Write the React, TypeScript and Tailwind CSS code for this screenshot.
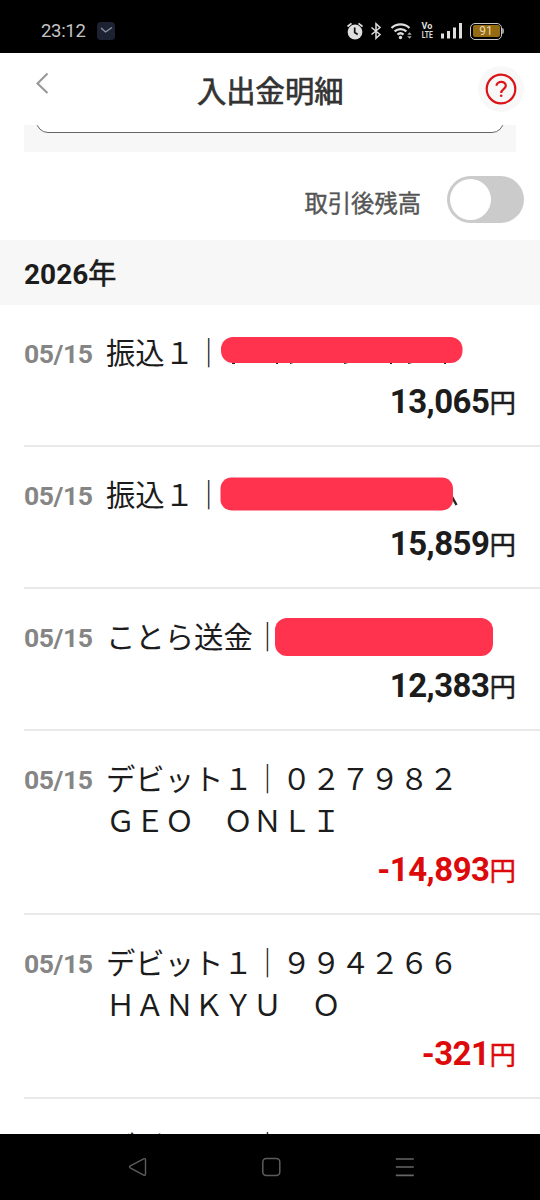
import React from 'react';

interface Transaction {
  id: number;
  date: string;
  lines: string[];
  amount: string;
  negative?: boolean;
  mask?: React.ReactNode;
}

const MASK_COLOR = '#ff334e';

const transactions: Transaction[] = [
  {
    id: 1,
    date: '05/15',
    lines: ['振込１｜'],
    amount: '13,065',
    mask: (
      <svg className="absolute left-[220px] top-[31px]" width="244" height="30" viewBox="0 0 244 30">
        <path
          d="M12 27.300h3M56 27.300h2M70 27.300l3-1M124 27.300l4-1M170 27.300h2M188 27.300l4-1M224 27.300h2"
          stroke="#222"
          strokeWidth="1.400"
        />
        <rect x="1" y="1" width="241.500" height="26" rx="12" fill={MASK_COLOR} />
      </svg>
    ),
  },
  {
    id: 2,
    date: '05/15',
    lines: ['振込１｜'],
    amount: '15,859',
    mask: (
      <svg className="absolute left-[220px] top-[29px]" width="240" height="36" viewBox="0 0 240 36">
        <path d="M231 19l5.500 10" stroke="#222" strokeWidth="2.400" />
        <rect x="0.500" y="1.500" width="232.500" height="33" rx="11" fill={MASK_COLOR} />
      </svg>
    ),
  },
  {
    id: 3,
    date: '05/15',
    lines: ['ことら送金｜'],
    amount: '12,383',
    mask: (
      <div className="absolute left-[275px] top-[29px] h-[38px] w-[218px] rounded-xl bg-[#ff334e]" />
    ),
  },
  {
    id: 4,
    date: '05/15',
    lines: ['デビット１｜０２７９８２', 'ＧＥＯ　ＯＮＬＩ'],
    amount: '-14,893',
    negative: true,
  },
  {
    id: 5,
    date: '05/15',
    lines: ['デビット１｜９９４２６６', 'ＨＡＮＫＹＵ　Ｏ'],
    amount: '-321',
    negative: true,
  },
  { id: 6, date: '', lines: ['デビット１｜'], amount: '' },
];

const StatusBar: React.FC = () => (
  <div className="flex h-[53px] shrink-0 items-center bg-black pt-[9px] pl-[41px] text-[#c4c4c4]">
    <span className="w-14 text-[18.500px] leading-none tracking-[-0.300px]">23:12</span>
    <svg width="18" height="18" viewBox="0 0 18 18" fill="none">
      <rect width="18" height="18" rx="4" fill="#1d2233" />
      <path d="M4 6l4.500 4 6.500-4.500" stroke="#8f97a3" strokeWidth="1.300" />
    </svg>

    <svg className="ml-[231px]" width="18" height="18" viewBox="0 0 18 18" fill="none">
      <circle cx="9" cy="10" r="7.400" fill="#dedede" />
      <path d="M1.500 4.500l4-3.200M16.500 4.500l-4-3.200" stroke="#dedede" strokeWidth="1.700" />
      <path d="M8.700 5.500V10.500l3 2" stroke="#111" strokeWidth="1.700" />
    </svg>
    <svg className="ml-[6px]" width="12" height="18" viewBox="0 0 12 18" fill="none">
      <path d="M1.500 5.500L10 12.500 6 16.300V1.700L10 5.500 1.500 12.500" stroke="#dedede" strokeWidth="1.500" />
    </svg>
    <svg className="ml-[8px]" width="24" height="18" viewBox="0 0 24 18" fill="none">
      <path d="M1.500 6a13 13 0 0 1 18 0M4.600 9.400a8.600 8.600 0 0 1 11.800 0M7.500 12.600a4.500 4.500 0 0 1 6 0" stroke="#dedede" strokeWidth="2.200" />
      <circle cx="10.500" cy="15.500" r="1.700" fill="#dedede" />
      <path d="M17.300 12.800l2.200-2.500 2.200 2.500zM17.300 14.300l2.200 2.500 2.200-2.500z" fill="#aaa" />
    </svg>
    <div className="ml-[7px] flex w-3 flex-col items-center text-[9px] font-bold text-[#dedede]">
      <span className="leading-[9px]">Vo</span>
      <span className="origin-center scale-x-75 leading-[9px]">LTE</span>
    </div>
    <svg className="ml-[7px]" width="24" height="18" viewBox="0 0 24 18" fill="#dedede">
      <rect x="1" y="11.500" width="3" height="5" />
      <rect x="7" y="9" width="3" height="7.500" />
      <rect x="13" y="5.500" width="3" height="11" />
      <rect x="19" y="1" width="3" height="15.500" />
    </svg>
    <div className="ml-[6px] flex items-center">
      <div className="flex h-[17px] w-8 items-center justify-center rounded-[5px] border-[1.500px] border-[#c9c9c9] p-[1.500px]">
        <span className="flex h-full w-full items-center justify-center rounded-[2px] bg-[#946a12] text-[12px] leading-none text-[#ead9ac]">
          91
        </span>
      </div>
      <div className="h-[6px] w-[2px] rounded-r bg-[#999]" />
    </div>
  </div>
);

const Header: React.FC = () => (
  <header className="flex h-[72px] shrink-0 items-center bg-white pr-4 pl-9">
    <svg width="46" height="24" viewBox="0 0 46 24" fill="none" className="-mt-3">
      <path d="M11.500 2.500L1.500 12.500l10 9.500" stroke="#999" strokeWidth="2.200" />
    </svg>
    <h1 className="ml-[115px] pt-[7px] text-[29.300px] leading-none font-normal text-[#333] [-webkit-text-stroke:0.700px_#333]">
      入出金明細
    </h1>
    <button className="ml-auto flex h-[46px] w-[46px] items-center justify-center rounded-full bg-[#f8f8f8]">
      <svg width="32" height="32" viewBox="0 0 32 32" fill="none" stroke="#dc1418">
        <circle cx="16" cy="16" r="14.300" strokeWidth="2.200" />
        <path d="M11.500 12.700c.3-5.200 9.500-5 9.300.2-.2 3.300-4.600 3.100-4.600 7" strokeWidth="2.200" />
        <circle cx="16.200" cy="22.800" r="1.300" fill="#dc1418" stroke="none" />
      </svg>
    </button>
  </header>
);

const TransactionRow: React.FC<{ item: Transaction }> = ({ item }) => (
  <li className="relative shrink-0 pt-7">
    <div className="flex pl-6">
      <span className="h-[42px] w-[82px] text-[26.500px] leading-[42px] font-bold tracking-[-0.400px] text-[#858585]">
        {item.date}
      </span>
      <div className="text-[29.350px] leading-[42px] whitespace-nowrap text-[#1c1c1c]">
        {item.lines.map((line) => (
          <p key={line} className="h-[42px]">{line}</p>
        ))}
      </div>
    </div>
    <div
      className={`flex h-[70px] items-baseline justify-end pt-[6px] pr-6 leading-[42px] ${
        item.negative ? 'text-[#dc0a0a]' : 'text-[#1c1c1c]'
      }`}
    >
      <span className="text-[33px] font-bold tracking-[-0.500px]">{item.amount}</span>
      {item.amount && (
        <span className="text-[26.500px] [-webkit-text-stroke:0.400px_currentColor]">円</span>
      )}
    </div>
    <div className="ml-6 h-[2px] bg-[#e9e9e9]" />
    {item.mask}
  </li>
);

const NavBar: React.FC = () => (
  <nav className="flex h-[66px] shrink-0 items-center bg-black pl-32">
    <svg width="20" height="20" viewBox="0 0 20 20" fill="none" stroke="#5c5c5c" strokeWidth="1.400">
      <path d="M15.700 1.800L2.200 8.900q-1.400.9 0 1.900l13.500 7.300q1.800.7 1.800-1V2.800q0-1.700-1.800-1z" />
    </svg>
    <svg className="ml-[113px]" width="20" height="20" viewBox="0 0 20 20" fill="none" stroke="#5c5c5c" strokeWidth="1.500">
      <rect x="1.800" y="1.600" width="17" height="17" rx="3.500" />
    </svg>
    <svg className="ml-[114px]" width="20" height="20" viewBox="0 0 20 20" stroke="#666" strokeWidth="1.600">
      <path d="M.8 2h18M.8 10h18M.8 18.400h18" />
    </svg>
  </nav>
);

export default function App() {
  return (
    <div className="flex h-[1200px] w-[540px] flex-col overflow-hidden bg-white font-[Roboto,'Noto_Sans_CJK_JP',sans-serif]">
      <StatusBar />
      <Header />
      <main className="flex min-h-0 flex-1 flex-col overflow-hidden">
        <div className="mx-6 flex h-[27px] shrink-0 items-start overflow-hidden bg-[#f7f7f7] px-3">
          <div className="-mt-5 h-7 w-full rounded-xl border-[1.500px] border-[#666] bg-white" />
        </div>
        <div className="flex h-[88px] shrink-0 items-center justify-end pr-4">
          <span className="mt-[17px] text-[23.300px] leading-none text-[#555] [-webkit-text-stroke:0.400px_#555]">
            取引後残高
          </span>
          <span className="mt-[6px] ml-[26px] flex h-[47px] w-[77px] items-center rounded-full bg-[#cbcbcb] p-[3px]">
            <span className="h-[41px] w-[41px] rounded-full bg-white" />
          </span>
        </div>
        <h2 className="flex h-[65px] shrink-0 items-center bg-[#f7f7f7] pt-[4px] pl-6 text-[28px] font-bold text-[#1c1c1c]">
          <span>2026</span>
          <span className="font-normal [-webkit-text-stroke:0.700px_#1c1c1c]">年</span>
        </h2>
        <ul className="flex flex-col">
          {transactions.map((item) => (
            <TransactionRow key={item.id} item={item} />
          ))}
        </ul>
      </main>
      <NavBar />
    </div>
  );
}
